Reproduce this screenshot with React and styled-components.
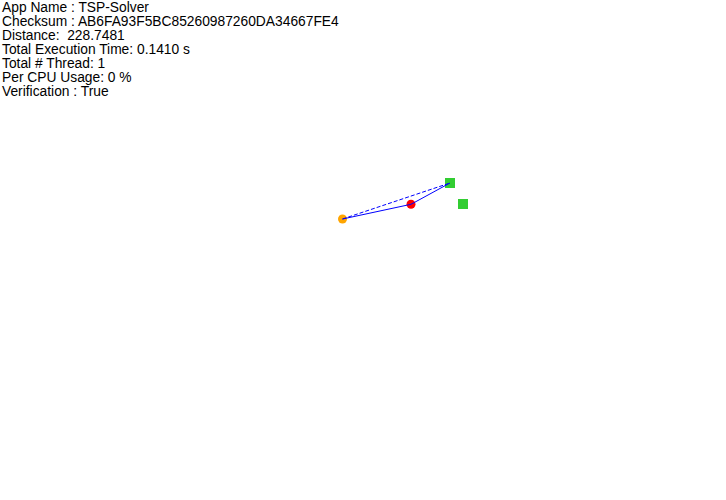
import React from "react";
import styled, { createGlobalStyle } from "styled-components";

const HEADER_HEIGHT = 98; // 7 lines x 14px

const GlobalStyle = createGlobalStyle`
  html, body {
    margin: 0;
    padding: 0;
    background: #ffffff;
  }
`;

const Page = styled.div`
  width: 726px;
  height: 500px;
  display: flex;
  flex-direction: column;
  overflow: hidden;
  background: #ffffff;
`;

const Stats = styled.div`
  display: flex;
  flex-direction: column;
  box-sizing: border-box;
  padding: 1px 0 0 2px;
  height: ${HEADER_HEIGHT}px;
  flex-shrink: 0;
`;

const StatLine = styled.div`
  font-family: "Liberation Sans", Arial, sans-serif;
  font-size: 13.8px;
  line-height: 14px;
  color: #000000;
  white-space: pre;
`;

const Canvas = styled.svg`
  display: block;
  flex: 1;
`;

const stats = [
  "App Name : TSP-Solver",
  "Checksum : AB6FA93F5BC85260987260DA34667FE4",
  "Distance:  228.7481",
  "Total Execution Time: 0.1410 s",
  "Total # Thread: 1",
  "Per CPU Usage: 0 %",
  "Verification : True",
];

// page coordinates of the drawn cities
const start = { x: 342.5, y: 219 };
const visited = { x: 411, y: 204.3 };
const cities = [
  { x: 450, y: 183 },
  { x: 463, y: 204 },
];

const toCanvas = (p) => ({ x: p.x, y: p.y - HEADER_HEIGHT });

export default function App() {
  const s = toCanvas(start);
  const v = toCanvas(visited);
  const c0 = toCanvas(cities[0]);

  return (
    <>
      <GlobalStyle />
      <Page>
        <Stats>
          {stats.map((line) => (
            <StatLine key={line}>{line}</StatLine>
          ))}
        </Stats>
        <Canvas width="726" height={500 - HEADER_HEIGHT}>
          {cities.map((c, i) => {
            const p = toCanvas(c);
            return (
              <rect key={i} x={p.x - 5} y={p.y - 5} width="10" height="10" fill="#32cd32" />
            );
          })}
          <circle cx={s.x} cy={s.y} r="4.5" fill="#ffa500" />
          <circle cx={v.x} cy={v.y} r="4.5" fill="#ff0000" />
          <line x1={s.x} y1={s.y} x2={c0.x} y2={c0.y} stroke="#0000ff" strokeWidth="1" strokeDasharray="4 2" />
          <polyline
            points={`${s.x},${s.y} ${v.x},${v.y} ${c0.x},${c0.y}`}
            fill="none"
            stroke="#0000ff"
            strokeWidth="1"
          />
        </Canvas>
      </Page>
    </>
  );
}
